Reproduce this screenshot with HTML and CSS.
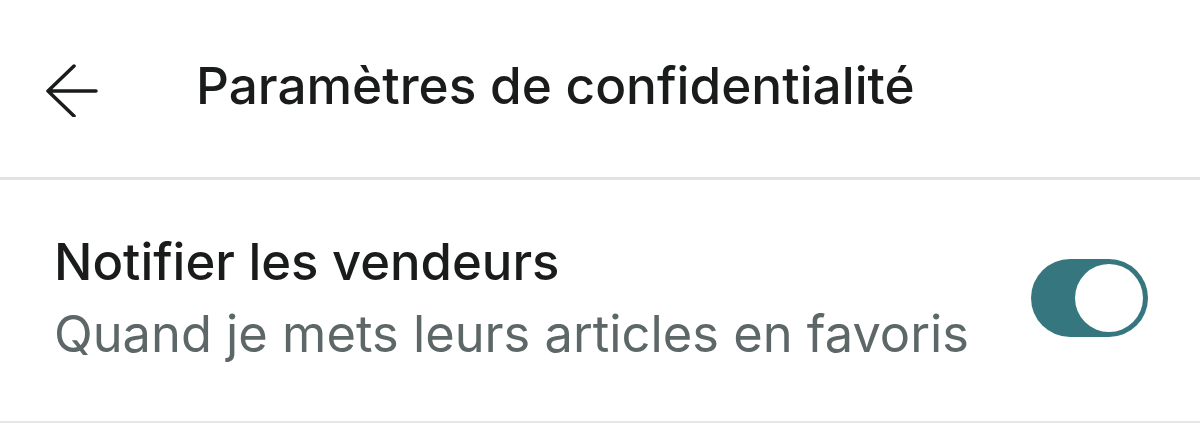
FILE: index.html
```html
<!DOCTYPE html>
<html lang="fr">

<head>
    <meta charset="UTF-8">
    <meta name="viewport" content="width=device-width, initial-scale=1.0">
    <title>Paramètres de confidentialité</title>
    <link rel="stylesheet" href="styles.css">
</head>

<body>
    <div class="header">
        <button class="back" aria-label="Retour">
            <svg width="56" height="56" viewBox="0 0 56 56">
                <path d="M31 5 L5 30 L31 55 M5 30 L53 30" fill="none" stroke="#1a1c1c" stroke-width="3.5"
                    stroke-linecap="round" stroke-linejoin="round" />
            </svg>
        </button>
        <h1 class="title">Paramètres de confidentialité</h1>
    </div>
    <div class="setting">
        <div class="setting-text">
            <div class="setting-label">Notifier les vendeurs</div>
            <div class="setting-desc">Quand je mets leurs articles en favoris</div>
        </div>
        <div class="toggle on"><span class="knob"></span></div>
    </div>
</body>

</html>
```

FILE: styles.css
```css
body {
    margin: 0;
    background: #ffffff;
    font-family: Inter, "Noto Sans", sans-serif;
    color: #1a1c1c;
}

.header {
    height: 177px;
    display: flex;
    align-items: center;
    border-bottom: 3px solid #e3e3e3;
}

.back {
    margin-left: 43px;
    padding: 0;
    border: none;
    background: none;
    display: flex;
}

.title {
    margin: 0 0 7px 97px;
    font-size: 51.3px;
    font-weight: 500;
}

.setting {
    display: flex;
    align-items: center;
    justify-content: space-between;
    padding: 0 52px 6px 54px;
    height: 235px;
    border-bottom: 2px solid #e6e6e6;
}

.setting-label {
    font-size: 50.8px;
    font-weight: 500;
    line-height: 72px;
}

.setting-desc {
    font-size: 50.6px;
    color: #5d6767;
    line-height: 72px;
}

.toggle {
    width: 117px;
    height: 78px;
    border-radius: 39px;
    background: #36767f;
    display: flex;
    align-items: center;
    justify-content: flex-end;
    padding: 0 5px;
    box-sizing: border-box;
}

.knob {
    width: 68px;
    height: 68px;
    border-radius: 50%;
    background: #ffffff;
}
```
